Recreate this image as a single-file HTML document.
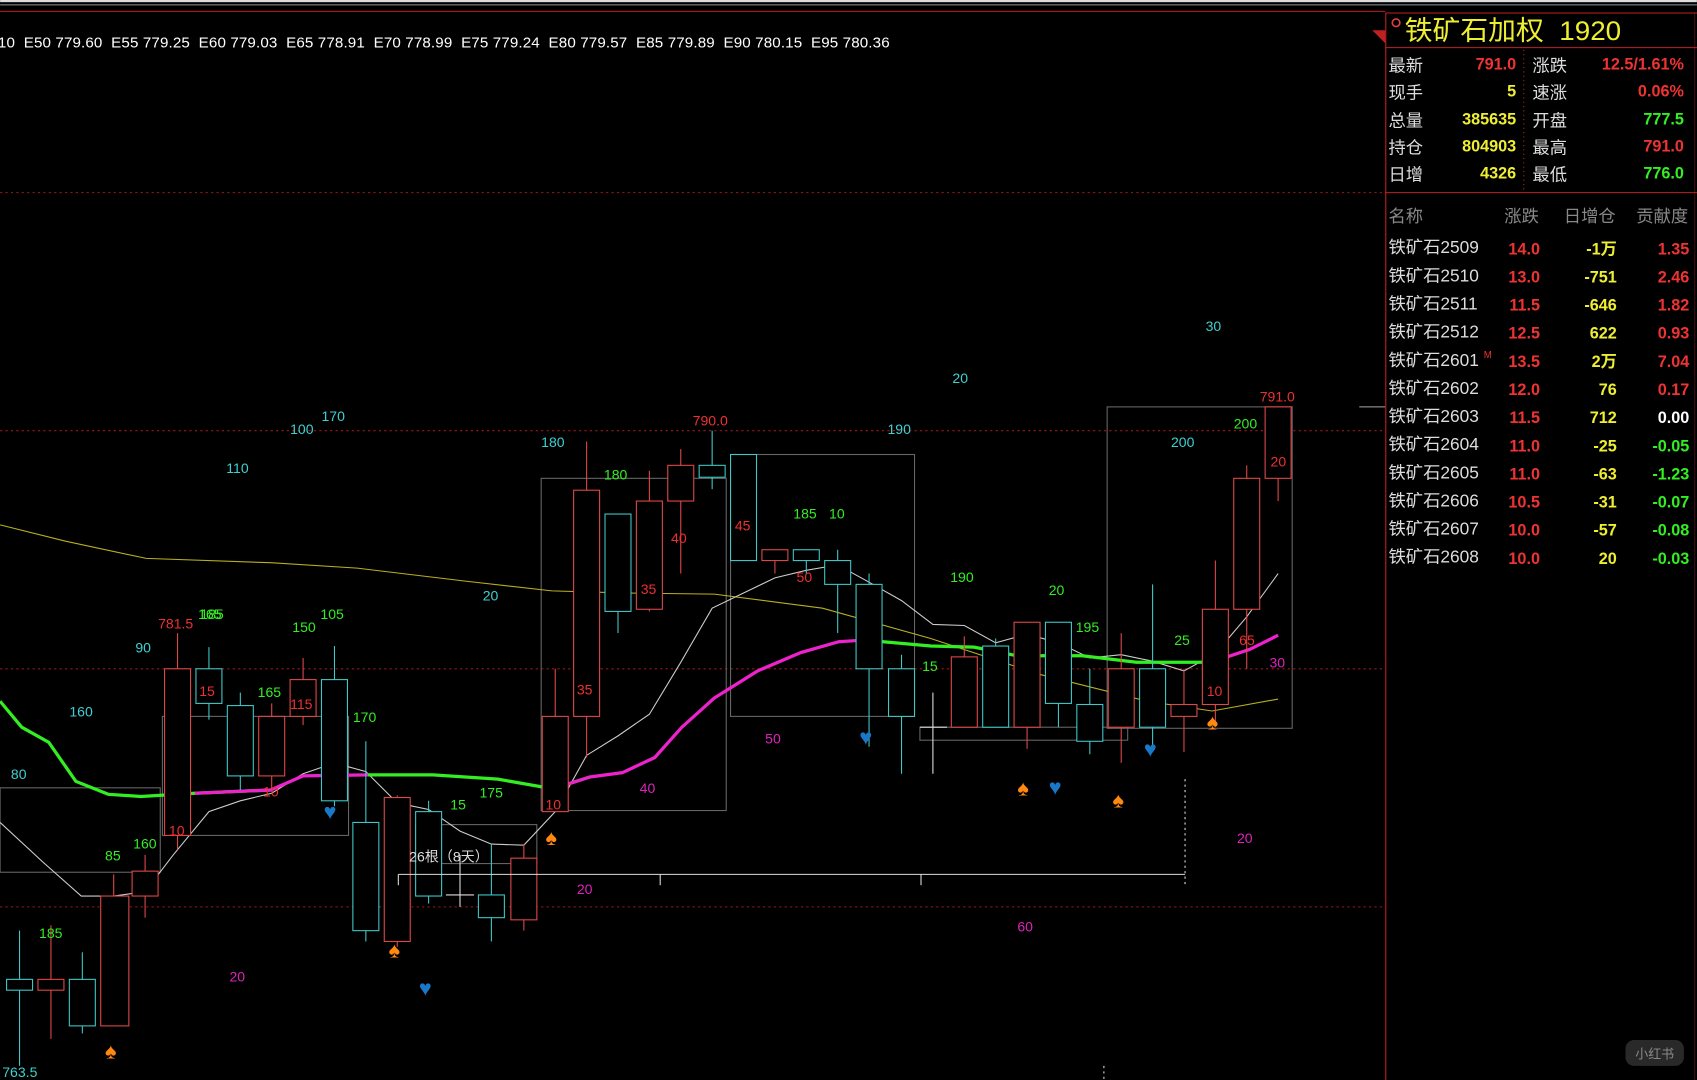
<!DOCTYPE html>
<html><head><meta charset="utf-8"><style>
html,body{margin:0;padding:0;background:#000;overflow:hidden}
svg{display:block}
text{font-family:"Liberation Sans","Noto Sans CJK SC",sans-serif}
</style></head><body>
<svg width="1697" height="1080" viewBox="0 0 1568 998" xmlns="http://www.w3.org/2000/svg">
<rect width="1568" height="998" fill="#000"/>
<rect x="0" y="0" width="1568" height="2" fill="#ddd"/>
<rect x="0" y="4" width="1568" height="1" fill="#888"/>
<rect x="0" y="10" width="1280" height="1" fill="#b02020"/>
<text x="-2" y="44" fill="#fff" font-size="14" textLength="824" lengthAdjust="spacing">10&#160;&#160;E50 779.60&#160;&#160;E55 779.25&#160;&#160;E60 779.03&#160;&#160;E65 778.91&#160;&#160;E70 778.99&#160;&#160;E75 779.24&#160;&#160;E80 779.57&#160;&#160;E85 779.89&#160;&#160;E90 780.15&#160;&#160;E95 780.36</text>
<g stroke="#a01818" stroke-dasharray="2,3" stroke-width="1">
<line x1="0" y1="178" x2="1280" y2="178"/><line x1="0" y1="398" x2="1280" y2="398"/>
<line x1="0" y1="618" x2="1280" y2="618"/><line x1="0" y1="838" x2="1280" y2="838"/>
</g>
<g fill="none" stroke="#666" stroke-width="1">
<rect x="0" y="728" width="148" height="78"/>
<rect x="150" y="662" width="172" height="110"/>
<rect x="500" y="442" width="171" height="307"/>
<rect x="675" y="420" width="170" height="242"/>
<rect x="850" y="672" width="192" height="12"/>
<rect x="1023" y="376" width="171" height="297"/>
<rect x="384" y="762" width="112" height="36"/>
</g>
<polyline fill="none" stroke="#b8b020" stroke-width="1" points="0,485 60,500 135,516 250,520 330,525 430,537 510,546 580,548 660,549 760,562 860,590 960,623 1060,648 1120,657 1181,646"/>
<polyline fill="none" stroke="#ccc" stroke-width="1" points="0,760 40,797 75,828 105,828 134,824 160,790 193,750 222,740 251,733 280,715 309,705 338,713 367,742 396,748 425,768 454,780 484,781 513,750 542,698 571,680 600,660 629,612 658,562 687,548 716,534 745,527 774,522 803,538 833,555 862,577 891,578 920,594 949,586 978,594 1007,608 1036,605 1065,611 1094,620 1123,604 1152,570 1181,530"/>
<polyline fill="none" stroke="#33ee22" stroke-width="3" points="0,648 20,672 45,686 70,722 100,734 130,736 180,733 250,730"/>
<polyline fill="none" stroke="#ee22cc" stroke-width="3" points="180,733 250,730 280,717 340,716"/>
<polyline fill="none" stroke="#33ee22" stroke-width="3" points="340,716 400,716 460,720 500,727 520,726 545,718"/>
<polyline fill="none" stroke="#ee22cc" stroke-width="3" points="520,726 545,718 575,714 605,700 630,672 660,645 700,620 740,603 775,593 805,591"/>
<polyline fill="none" stroke="#33ee22" stroke-width="3" points="805,592 860,597 900,598 940,606 1000,606 1050,612 1110,612 1128,609"/>
<polyline fill="none" stroke="#ee22cc" stroke-width="3" points="1128,609 1155,600 1181,587"/>
<g fill="none" stroke-width="1">
<g stroke="#3fc8c8">
<line x1="18" y1="860" x2="18" y2="985"/><rect x="6" y="905" width="24" height="10" fill="#000"/>
<line x1="76" y1="880" x2="76" y2="955"/><rect x="64" y="905" width="24" height="43" fill="#000"/>
<line x1="193" y1="598" x2="193" y2="665"/><rect x="181" y="618" width="24" height="32" fill="#000"/>
<line x1="222" y1="640" x2="222" y2="730"/><rect x="210" y="652" width="24" height="65" fill="#000"/>
<line x1="309" y1="597" x2="309" y2="745"/><rect x="297" y="628" width="24" height="112" fill="#000"/>
<line x1="338" y1="685" x2="338" y2="870"/><rect x="326" y="760" width="24" height="100" fill="#000"/>
<line x1="396" y1="740" x2="396" y2="835"/><rect x="384" y="750" width="24" height="78" fill="#000"/>
<line x1="454" y1="780" x2="454" y2="870"/><rect x="442" y="827" width="24" height="21" fill="#000"/>
<line x1="571" y1="475" x2="571" y2="585"/><rect x="559" y="475" width="24" height="90" fill="#000"/>
<line x1="658" y1="398" x2="658" y2="452"/><rect x="646" y="430" width="24" height="11" fill="#000"/>
<rect x="675" y="420" width="24" height="98" fill="#000"/>
<line x1="745" y1="508" x2="745" y2="530"/><rect x="733" y="508" width="24" height="10" fill="#000"/>
<line x1="774" y1="508" x2="774" y2="585"/><rect x="762" y="518" width="24" height="22" fill="#000"/>
<line x1="803" y1="530" x2="803" y2="690"/><rect x="791" y="540" width="24" height="78" fill="#000"/>
<line x1="833" y1="605" x2="833" y2="715"/><rect x="821" y="618" width="24" height="44" fill="#000"/>
<line x1="920" y1="590" x2="920" y2="672"/><rect x="908" y="597" width="24" height="75" fill="#000"/>
<line x1="978" y1="575" x2="978" y2="672"/><rect x="966" y="575" width="24" height="75" fill="#000"/>
<line x1="1007" y1="618" x2="1007" y2="697"/><rect x="995" y="651" width="24" height="34" fill="#000"/>
<line x1="1065" y1="540" x2="1065" y2="690"/><rect x="1053" y="618" width="24" height="54" fill="#000"/>
</g>
<g stroke="#e04848">
<line x1="47" y1="855" x2="47" y2="960"/><rect x="35" y="905" width="24" height="10" fill="#000"/>
<line x1="105" y1="808" x2="105" y2="948"/><rect x="93" y="828" width="26" height="120" fill="#000"/>
<line x1="134" y1="790" x2="134" y2="848"/><rect x="122" y="805" width="24" height="23" fill="#000"/>
<line x1="164" y1="585" x2="164" y2="785"/><rect x="152" y="618" width="24" height="154" fill="#000"/>
<line x1="251" y1="650" x2="251" y2="730"/><rect x="239" y="662" width="24" height="55" fill="#000"/>
<line x1="280" y1="608" x2="280" y2="670"/><rect x="268" y="628" width="24" height="34" fill="#000"/>
<line x1="367" y1="735" x2="367" y2="875"/><rect x="355" y="737" width="24" height="133" fill="#000"/>
<line x1="484" y1="780" x2="484" y2="860"/><rect x="472" y="793" width="24" height="57" fill="#000"/>
<line x1="513" y1="618" x2="513" y2="750"/><rect x="501" y="662" width="24" height="88" fill="#000"/>
<line x1="542" y1="408" x2="542" y2="700"/><rect x="530" y="453" width="24" height="209" fill="#000"/>
<line x1="600" y1="435" x2="600" y2="565"/><rect x="588" y="463" width="24" height="100" fill="#000"/>
<line x1="629" y1="415" x2="629" y2="530"/><rect x="617" y="430" width="24" height="33" fill="#000"/>
<line x1="716" y1="508" x2="716" y2="530"/><rect x="704" y="508" width="24" height="10" fill="#000"/>
<line x1="891" y1="588" x2="891" y2="672"/><rect x="879" y="607" width="24" height="65" fill="#000"/>
<line x1="949" y1="575" x2="949" y2="692"/><rect x="937" y="575" width="24" height="97" fill="#000"/>
<line x1="1036" y1="585" x2="1036" y2="705"/><rect x="1024" y="618" width="24" height="54" fill="#000"/>
<line x1="1094" y1="618" x2="1094" y2="695"/><rect x="1082" y="651" width="24" height="11" fill="#000"/>
<line x1="1123" y1="518" x2="1123" y2="672"/><rect x="1111" y="563" width="24" height="88" fill="#000"/>
<line x1="1152" y1="430" x2="1152" y2="618"/><rect x="1140" y="442" width="24" height="121" fill="#000"/>
<line x1="1181" y1="376" x2="1181" y2="463"/><rect x="1169" y="376" width="24" height="66" fill="#000"/>
</g>
<g stroke="#ddd"><line x1="862" y1="640" x2="862" y2="715"/><line x1="850" y1="672" x2="875" y2="672"/>
<line x1="425" y1="790" x2="425" y2="838"/><line x1="412" y1="827" x2="438" y2="827"/>
<line x1="368" y1="808" x2="1095" y2="808"/><line x1="368" y1="808" x2="368" y2="818"/><line x1="610" y1="808" x2="610" y2="818"/><line x1="851" y1="808" x2="851" y2="818"/><line x1="1095" y1="720" x2="1095" y2="818" stroke-dasharray="2,3"/>
<line x1="1020" y1="985" x2="1020" y2="998" stroke-dasharray="2,3"/>
<line x1="1256" y1="376" x2="1280" y2="376" stroke="#aaa"/></g>
</g>
<g font-size="13">
<g fill="#3fd0d0"><text x="10" y="720">80</text><text x="64" y="662">160</text><text x="125" y="603">90</text><text x="209" y="437">110</text><text x="268" y="401">100</text><text x="297" y="389">170</text><text x="446" y="555">20</text><text x="500" y="413">180</text><text x="820" y="401">190</text><text x="880" y="354">20</text><text x="1114" y="306">30</text><text x="1082" y="413">200</text><text x="2" y="995">763.5</text></g>
<g fill="#33ee22"><text x="97" y="795">85</text><text x="123" y="784">160</text><text x="36" y="867">185</text><text x="183" y="572">165</text><text x="183" y="572" dx="2">185</text><text x="238" y="644">165</text><text x="270" y="584">150</text><text x="296" y="572">105</text><text x="326" y="667">170</text><text x="416" y="748">15</text><text x="443" y="737">175</text><text x="558" y="443">180</text><text x="733" y="479">185</text><text x="766" y="479">10</text><text x="852" y="620">15</text><text x="878" y="538">190</text><text x="969" y="550">20</text><text x="994" y="584">195</text><text x="1085" y="596">25</text><text x="1140" y="396">200</text></g>
<g fill="#ee3030"><text x="146" y="581">781.5</text><text x="184" y="643">15</text><text x="268" y="655">115</text><text x="243" y="736">10</text><text x="156" y="772">10</text><text x="504" y="748">10</text><text x="533" y="642">35</text><text x="592" y="549">35</text><text x="620" y="502">40</text><text x="640" y="393">790.0</text><text x="679" y="490">45</text><text x="736" y="538">50</text><text x="1115" y="643">10</text><text x="1145" y="596">65</text><text x="1174" y="431">20</text><text x="1164" y="371">791.0</text></g>
<g fill="#dd22bb"><text x="212" y="907">20</text><text x="533" y="826">20</text><text x="591" y="733">40</text><text x="707" y="687">50</text><text x="940" y="861">60</text><text x="1143" y="779">20</text><text x="1173" y="617">30</text></g>
<text x="378" y="796" fill="#ddd">26根（8天）</text>
</g>
<g font-size="20"><g fill="#ff8811"><text x="97" y="978">♠</text><text x="359" y="885">♠</text><text x="504" y="781">♠</text><text x="940" y="735">♠</text><text x="1028" y="746">♠</text><text x="1115" y="674">♠</text></g>
<g fill="#1a78c8"><text x="299" y="757">♥</text><text x="387" y="920">♥</text><text x="794" y="688">♥</text><text x="969" y="734">♥</text><text x="1057" y="699">♥</text></g></g>
<line x1="1280.5" y1="12" x2="1280.5" y2="998" stroke="#c02020"/>
<line x1="1566" y1="12" x2="1566" y2="998" stroke="#401010"/>
<line x1="1280" y1="12" x2="1568" y2="12" stroke="#c02020"/>
<polygon points="1268,28 1280,28 1280,40" fill="#c02020"/>
<circle cx="1290" cy="21" r="3.5" fill="none" stroke="#e04040" stroke-width="1.5"/>
<text x="1298" y="37" fill="#eeee33" font-size="25" textLength="200" lengthAdjust="spacingAndGlyphs">铁矿石加权&#160;&#160;1920</text>
<line x1="1280" y1="44" x2="1568" y2="44" stroke="#c02020"/>
<line x1="1408" y1="46" x2="1408" y2="176" stroke="#c02020" stroke-dasharray="1,3"/>
<line x1="1280" y1="178" x2="1568" y2="178" stroke="#c02020"/>
<g font-size="16" fill="#ddd"><text x="1283" y="66">最新</text><text x="1283" y="91">现手</text><text x="1283" y="117">总量</text><text x="1283" y="142">持仓</text><text x="1283" y="167">日增</text>
<text x="1416" y="66">涨跌</text><text x="1416" y="91">速涨</text><text x="1416" y="117">开盘</text><text x="1416" y="142">最高</text><text x="1416" y="167">最低</text></g>
<g font-size="15" font-weight="bold" text-anchor="end"><text x="1401" y="64" fill="#ee3333">791.0</text><text x="1401" y="89" fill="#eeee33">5</text><text x="1401" y="115" fill="#eeee33">385635</text><text x="1401" y="140" fill="#eeee33">804903</text><text x="1401" y="165" fill="#eeee33">4326</text>
<text x="1556" y="64" fill="#ee3333">12.5/1.61%</text><text x="1556" y="89" fill="#ee3333">0.06%</text><text x="1556" y="115" fill="#33ee22">777.5</text><text x="1556" y="140" fill="#ee3333">791.0</text><text x="1556" y="165" fill="#33ee22">776.0</text></g>
<g font-size="16" fill="#888"><text x="1283" y="205">名称</text><text x="1390" y="205">涨跌</text><text x="1445" y="205">日增仓</text><text x="1512" y="205">贡献度</text></g>
<g font-size="16" fill="#ddd"><text x="1283" y="234">铁矿石2509</text><text x="1283" y="260">铁矿石2510</text><text x="1283" y="286">铁矿石2511</text><text x="1283" y="312">铁矿石2512</text><text x="1283" y="338">铁矿石2601</text><text x="1283" y="364">铁矿石2602</text><text x="1283" y="390">铁矿石2603</text><text x="1283" y="416">铁矿石2604</text><text x="1283" y="442">铁矿石2605</text><text x="1283" y="468">铁矿石2606</text><text x="1283" y="494">铁矿石2607</text><text x="1283" y="520">铁矿石2608</text></g>
<text x="1371" y="331" fill="#ee3333" font-size="9">M</text>
<g font-size="15" font-weight="bold" text-anchor="end">
<g fill="#ee3333"><text x="1423" y="235">14.0</text><text x="1423" y="261">13.0</text><text x="1423" y="287">11.5</text><text x="1423" y="313">12.5</text><text x="1423" y="339">13.5</text><text x="1423" y="365">12.0</text><text x="1423" y="391">11.5</text><text x="1423" y="417">11.0</text><text x="1423" y="443">11.0</text><text x="1423" y="469">10.5</text><text x="1423" y="495">10.0</text><text x="1423" y="521">10.0</text></g>
<g fill="#eeee33"><text x="1494" y="235">-1万</text><text x="1494" y="261">-751</text><text x="1494" y="287">-646</text><text x="1494" y="313">622</text><text x="1494" y="339">2万</text><text x="1494" y="365">76</text><text x="1494" y="391">712</text><text x="1494" y="417">-25</text><text x="1494" y="443">-63</text><text x="1494" y="469">-31</text><text x="1494" y="495">-57</text><text x="1494" y="521">20</text></g>
<text x="1561" y="235" fill="#ee3333">1.35</text><text x="1561" y="261" fill="#ee3333">2.46</text><text x="1561" y="287" fill="#ee3333">1.82</text><text x="1561" y="313" fill="#ee3333">0.93</text><text x="1561" y="339" fill="#ee3333">7.04</text><text x="1561" y="365" fill="#ee3333">0.17</text><text x="1561" y="391" fill="#fff">0.00</text>
<g fill="#33ee22"><text x="1561" y="417">-0.05</text><text x="1561" y="443">-1.23</text><text x="1561" y="469">-0.07</text><text x="1561" y="495">-0.08</text><text x="1561" y="521">-0.03</text></g>
</g>
<rect x="1502" y="961" width="54" height="24" rx="8" fill="#333" opacity="0.8"/>
<text x="1529" y="978" fill="#888" font-size="12" text-anchor="middle">小红书</text>
</svg>
</body></html>
